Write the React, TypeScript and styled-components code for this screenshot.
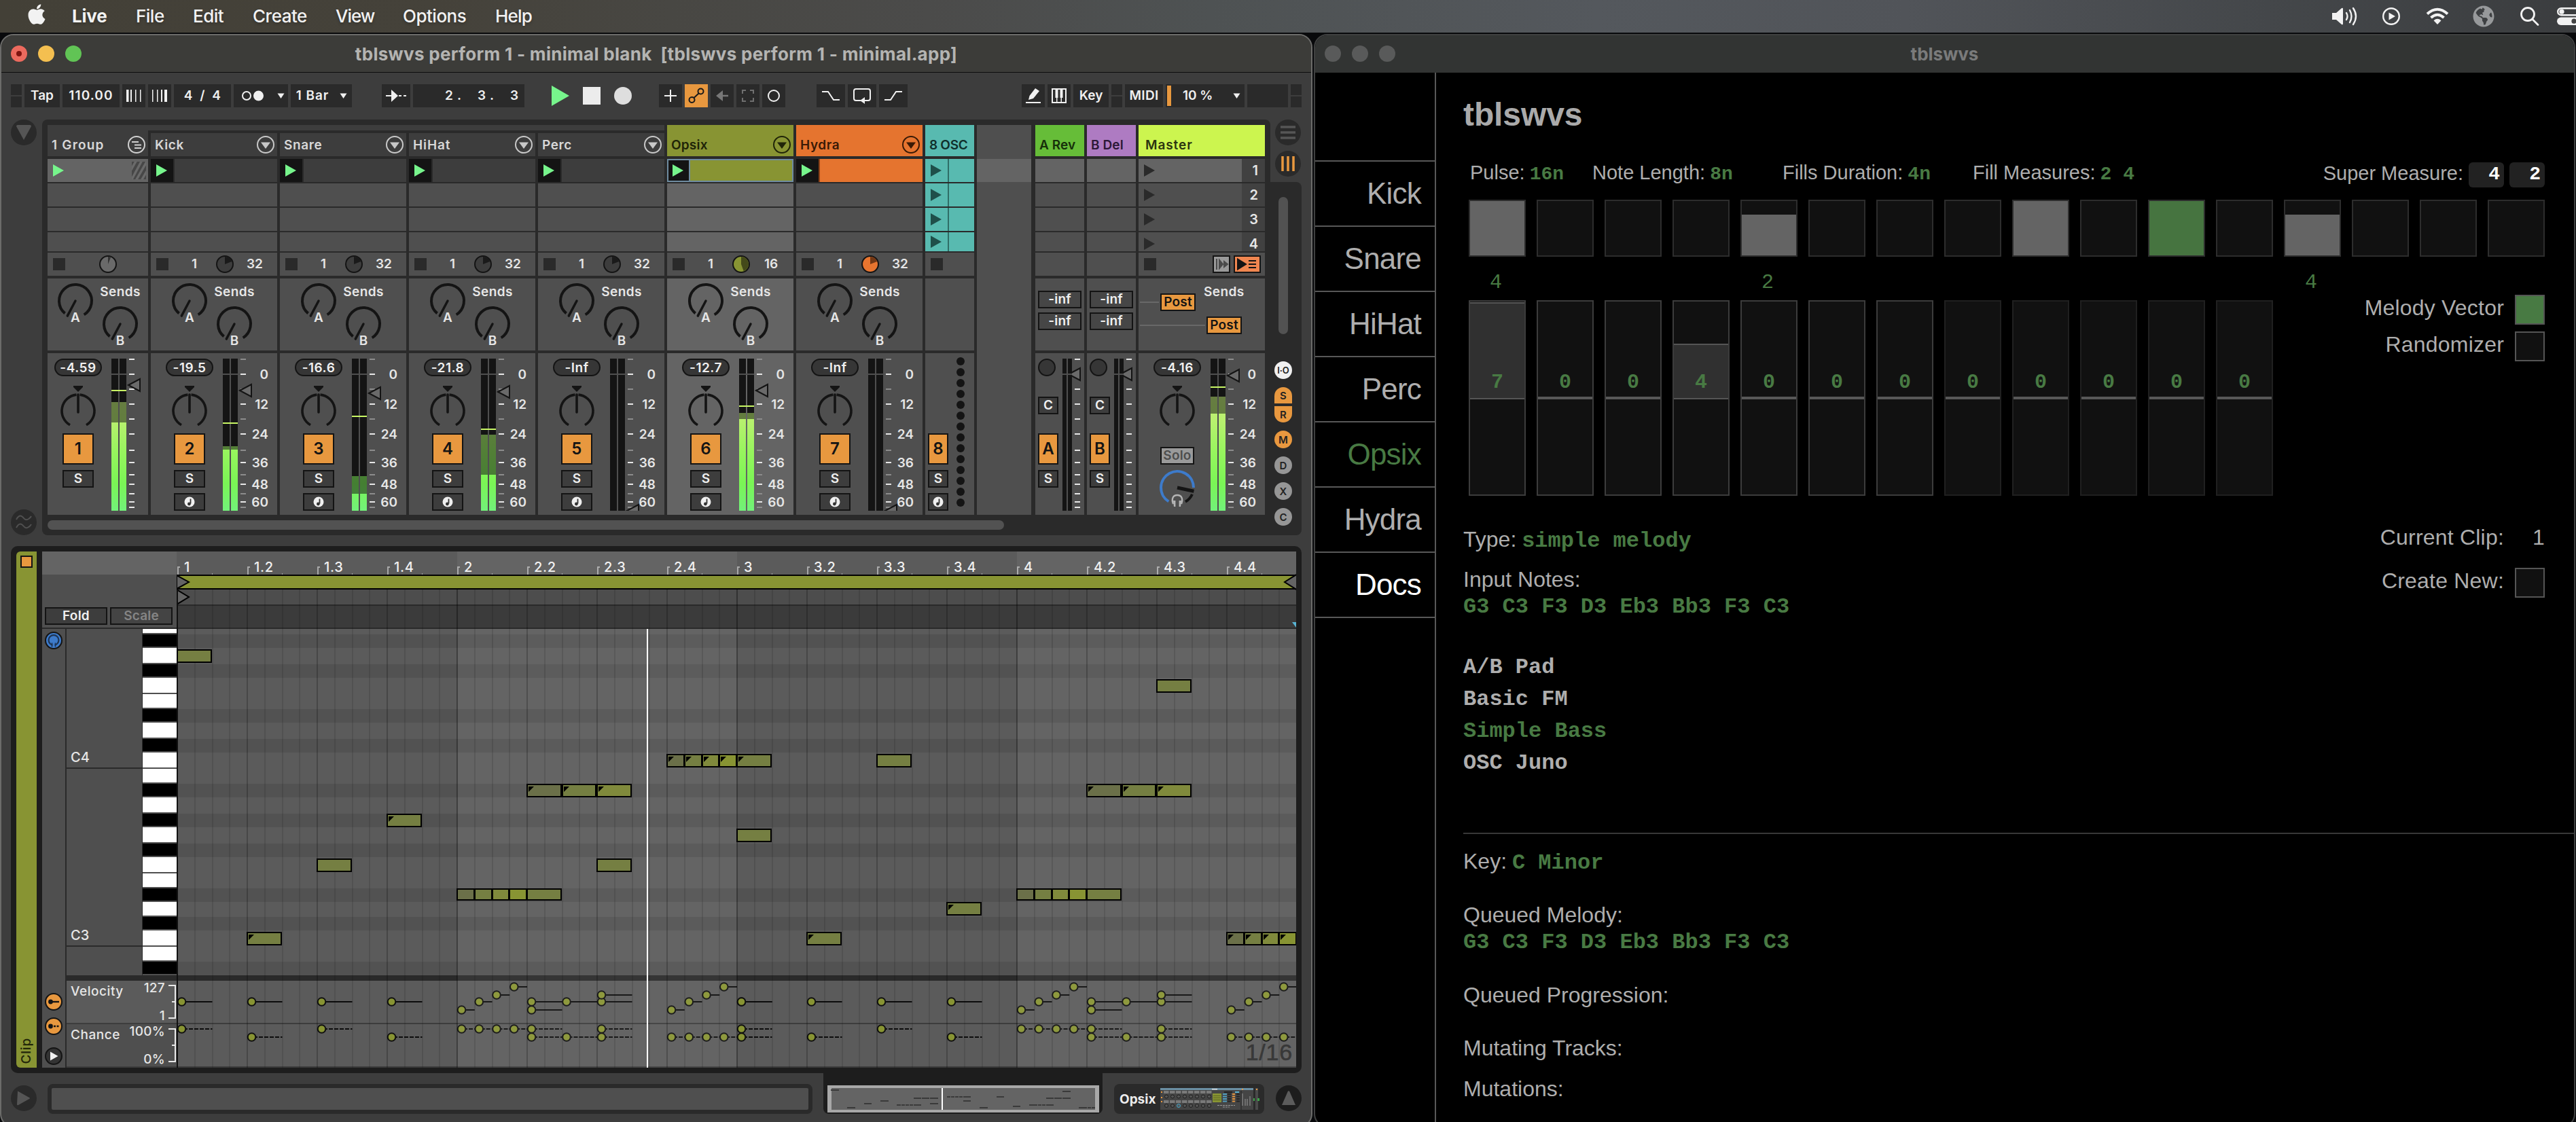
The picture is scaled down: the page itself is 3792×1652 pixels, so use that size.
import React from 'react';
import styled, { createGlobalStyle, css } from 'styled-components';
import { FaApple, FaGlobeAmericas } from 'react-icons/fa';

const ui = "Inter, 'Noto Sans', sans-serif";
const helv = "'Liberation Sans', Arial, sans-serif";
const mono = "'Liberation Mono', 'Courier New', monospace";

const c = {
  body: '#3d3d3d',
  dark: '#2a2a2a',
  deep: '#1d1d1d',
  ink: '#141414',
  cell: '#4f4f4f',
  lit: '#646464',
  text: '#e6e6e6',
  orange: '#e8983f',
  olive: '#889433',
  green: '#487a43',
  play: '#77f58c',
};

const Global = createGlobalStyle`
  * { box-sizing: border-box; }
  html, body { margin: 0; background: #000; }
  svg { display: block; flex: none; overflow: visible; }
`;

/* ---------- desktop ---------- */

const Desktop = styled.div`
  width: 3792px;
  height: 1652px;
  overflow: hidden;
  background: #08090b;
  font-family: ${ui};
`;

const MenuBar = styled.header`
  display: flex;
  align-items: center;
  justify-content: space-between;
  height: 48px;
  padding: 0 0 0 37px;
  color: #f2f2f2;
  background: linear-gradient(90deg, #434037 0%, #45423a 17%, #484743 26%, #4b4b4a 36%, #4e5253 47%, #54585d 62%, #515459 74%, #44474a 88%, #3b3d3f 100%);
`;

const MenuGroup = styled.nav`
  display: flex;
  align-items: center;
  height: 48px;
`;

const MenuItem = styled.span<{ $w: number; $bold?: boolean; $ls?: number }>`
  width: ${(p) => p.$w}px;
  font-size: 26px;
  line-height: 46px;
  font-weight: ${(p) => (p.$bold ? 700 : 500)};
  letter-spacing: ${(p) => p.$ls ?? -0.5}px;
  white-space: nowrap;
  text-shadow: 0 2px 4px rgba(0, 0, 0, 0.25);
`;

const AppleMark = styled.span`
  width: 69px;
  height: 36px;
  margin-top: -5px;
`;

const StatusIcon = styled.span<{ $w: number }>`
  display: flex;
  justify-content: center;
  width: ${(p) => p.$w}px;
`;

const Windows = styled.div`
  display: flex;
  gap: 2px;
  padding-top: 2px;
  height: 1604px;
`;

const Window = styled.section<{ $w: number; $edge: string; $bg: string }>`
  flex: none;
  width: ${(p) => p.$w}px;
  height: 1610px;
  overflow: hidden;
  border: 2px solid ${(p) => p.$edge};
  border-radius: 20px;
  background: ${(p) => p.$bg};
`;

const TitleBar = styled.div<{ $bg: string; $line: string; $fg: string }>`
  display: grid;
  grid-template-columns: 140px 1fr 140px;
  align-items: center;
  height: 55px;
  background: ${(p) => p.$bg};
  border-bottom: 1px solid ${(p) => p.$line};
  color: ${(p) => p.$fg};
`;

const Lights = styled.div`
  display: flex;
  gap: 16px;
  padding-left: 14px;
`;

const Light = styled.span<{ $c: string; $dot?: boolean }>`
  display: flex;
  align-items: center;
  justify-content: center;
  width: 24px;
  height: 24px;
  border-radius: 50%;
  background: ${(p) => p.$c};
  ${(p) =>
    p.$dot &&
    css`
      &::after {
        content: '';
        width: 8px;
        height: 8px;
        border-radius: 50%;
        background: #7d1410;
      }
    `}
`;

const Title = styled.h2<{ $ls?: number }>`
  margin: 0;
  font-size: 26px;
  font-weight: 700;
  line-height: 51px;
  text-align: center;
  white-space: pre;
  letter-spacing: ${(p) => p.$ls ?? 0}px;
`;

/* ---------- Live: control bar ---------- */

const ControlBar = styled.div`
  display: flex;
  gap: 4px;
  height: 69px;
  padding: 17px 0 0 14px;
`;

const Tool = styled.span<{ $w: number; $ml?: number; $on?: boolean; $bare?: boolean; $ls?: number }>`
  display: flex;
  flex: none;
  align-items: center;
  justify-content: center;
  width: ${(p) => p.$w}px;
  height: 34px;
  margin-left: ${(p) => p.$ml ?? 0}px;
  background: ${(p) => (p.$bare ? 'transparent' : p.$on ? c.orange : c.dark)};
  color: #f0f0f0;
  font-size: 19px;
  font-weight: 600;
  line-height: 34px;
  letter-spacing: ${(p) => p.$ls ?? 0}px;
  white-space: pre;
`;

const Position = styled.span`
  display: flex;
  justify-content: space-between;
  width: 24px;
  margin-right: 24px;
  &:last-child { margin-right: -4px; }
`;

const Split = styled.span`
  display: flex;
  flex: none;
  flex-direction: column;
  gap: 2px;
  width: 16px;
  height: 34px;
  &::before,
  &::after {
    content: '';
    flex: 1;
    background: ${c.dark};
  }
`;

const Caret = () => (
  <svg width="11" height="8" viewBox="0 0 11 8">
    <path d="M0.5 0.5h10L5.5 8z" fill="#f0f0f0" />
  </svg>
);

const CpuBar = styled.span`
  width: 6px;
  height: 30px;
  margin-right: 17px;
  background: ${c.orange};
`;

/* ---------- Live: session view ---------- */

const Session = styled.div`
  display: flex;
  height: 612px;
`;

const Gutter = styled.div`
  display: flex;
  flex-direction: column;
  justify-content: space-between;
  width: 60px;
  padding-left: 14px;
`;

const RoundButton = styled.span<{ $bg?: string }>`
  display: flex;
  flex: none;
  align-items: center;
  justify-content: center;
  width: 38px;
  height: 38px;
  border-radius: 50%;
  background: ${(p) => p.$bg ?? c.dark};
`;

const Mixer = styled.div`
  width: 1808px;
  padding: 8px 8px 8px;
  border-radius: 8px 8px 0 8px;
  background: ${c.dark};
`;

const Columns = styled.div`
  display: flex;
  gap: 4px;
  height: 574px;
`;

const Column = styled.div<{ $w: number; $ml?: number }>`
  display: flex;
  flex: none;
  flex-direction: column;
  width: ${(p) => p.$w}px;
  margin-left: ${(p) => p.$ml ?? 0}px;
`;

const Blank = styled(Column)`
  background: linear-gradient(${c.cell} 50px, ${c.lit} 50px, ${c.lit} 84px, ${c.cell} 84px);
`;

const GroupStrip = styled.div`
  width: calc(100% + 4px);
  height: 8px;
  margin: 0 0 4px -4px;
  background: ${c.body};
`;

const Head = styled.div<{ $bg: string; $fg: string; $h: number; $ls?: number }>`
  display: flex;
  align-items: flex-end;
  justify-content: space-between;
  height: ${(p) => p.$h}px;
  margin-bottom: 4px;
  padding: 0 4px 4px 6px;
  background: ${(p) => p.$bg};
  color: ${(p) => p.$fg};
  font-size: 19px;
  font-weight: 600;
  line-height: 25px;
  letter-spacing: ${(p) => p.$ls ?? 0.6}px;
  white-space: nowrap;
`;

const Slot = styled.div<{ $bg: string; $h?: number; $edge?: string }>`
  display: flex;
  align-items: center;
  height: ${(p) => p.$h ?? 34}px;
  margin-bottom: 2px;
  background: ${(p) => p.$bg};
  overflow: hidden;
  ${(p) => p.$edge && `border: 2px solid ${p.$edge};`}
`;

const Launch = styled.span<{ $bg: string; $line: string; $w?: number }>`
  display: flex;
  align-items: center;
  width: ${(p) => p.$w ?? 35}px;
  height: 100%;
  padding-left: 8px;
  background: ${(p) => p.$bg};
  border-right: 2px solid ${(p) => p.$line};
`;

const SceneNumber = styled.span`
  width: 34px;
  height: 34px;
  margin-left: auto;
  padding-right: 10px;
  background: #414141;
  color: ${c.text};
  font-size: 20px;
  font-weight: 600;
  line-height: 34px;
  text-align: right;
`;

const Status = styled.div`
  display: flex;
  align-items: center;
  height: 34px;
  margin-bottom: 4px;
  padding-left: 8px;
  background: ${c.cell};
  color: ${c.text};
  font-size: 19px;
  font-weight: 600;
  line-height: 34px;
`;

const StopSquare = styled.span`
  flex: none;
  width: 18px;
  height: 18px;
  background: ${c.dark};
`;

const Count = styled.span<{ $w: number }>`
  width: ${(p) => p.$w}px;
  text-align: center;
`;

const Sends = styled.div<{ $bg: string; $pl: number }>`
  display: flex;
  gap: 14px;
  height: 106px;
  margin-bottom: 4px;
  padding: 7px 0 0 ${(p) => p.$pl}px;
  background: ${(p) => p.$bg};
`;

const SendColumn = styled.div`
  display: flex;
  flex-direction: column;
  align-items: center;
  gap: 9px;
  width: 52px;
`;

const SendsLabel = styled.span`
  color: ${c.text};
  font-size: 19px;
  font-weight: 600;
  line-height: 25px;
  letter-spacing: 0.4px;
`;

const Strip = styled.div<{ $bg: string }>`
  display: flex;
  height: 238px;
  padding-top: 8px;
  background: ${(p) => p.$bg};
  overflow: hidden;
`;

const Controls = styled.div<{ $w: number; $pad: string; $start?: boolean }>`
  display: flex;
  flex: none;
  flex-direction: column;
  align-items: ${(p) => (p.$start ? 'flex-start' : 'center')};
  gap: 8px;
  width: ${(p) => p.$w}px;
  padding: ${(p) => p.$pad};
`;

const Pill = styled.span<{ $w?: number }>`
  width: ${(p) => p.$w ?? 70}px;
  height: 26px;
  margin-bottom: 2px;
  border: 2px solid ${c.ink};
  border-radius: 13px;
  background: #363636;
  color: #f0f0f0;
  font-size: 19px;
  font-weight: 600;
  line-height: 23px;
  letter-spacing: 0.5px;
  text-align: center;
`;

const PadButton = styled.span<{ $w: number; $h: number; $bg?: string; $fg?: string; $fs?: number; $mt?: number }>`
  display: flex;
  flex: none;
  align-items: center;
  justify-content: center;
  width: ${(p) => p.$w}px;
  height: ${(p) => p.$h}px;
  margin-top: ${(p) => p.$mt ?? 0}px;
  border: 2px solid ${c.ink};
  background: ${(p) => p.$bg ?? c.body};
  color: ${(p) => p.$fg ?? '#f0f0f0'};
  font-size: ${(p) => p.$fs ?? 19}px;
  font-weight: 600;
  line-height: 24px;
  letter-spacing: 0.2px;
`;

const MeterBox = styled.div`
  position: relative;
  display: flex;
  flex: none;
  gap: 2px;
  height: 224px;
`;

const MeterBar = styled.div<{ $w: number; $live: boolean }>`
  width: ${(p) => p.$w}px;
  height: 224px;
  background: ${(p) =>
    p.$live ? 'linear-gradient(180deg, #d2f47c 0%, #b9f06f 40%, #96f55d 62%, #7af555 82%, #72f17a 100%)' : c.ink};
`;

const MeterEmpty = styled.div`
  background: ${c.ink};
`;

const MeterDim = styled.div`
  background: rgba(20, 20, 20, 0.52);
`;

const ZeroLine = styled.i`
  position: absolute;
  top: 22px;
  left: 0;
  right: 0;
  height: 2px;
  background: ${c.cell};
`;

const PeakLine = styled.i`
  position: absolute;
  left: 0;
  right: 0;
  height: 2px;
  background: #c9f765;
`;

const Dots = styled.div`
  display: flex;
  flex-direction: column;
  gap: 4px;
  padding: 0 0 0 12px;
  margin-top: -2px;
  & > i {
    width: 12px;
    height: 12px;
    border-radius: 50%;
    background: ${c.ink};
  }
`;

const ReturnSends = styled.div`
  display: flex;
  flex-direction: column;
  gap: 6px;
  height: 106px;
  margin-bottom: 4px;
  padding: 18px 4px 0;
  background: ${c.cell};
`;

const MasterSends = styled.div`
  display: grid;
  grid-template-columns: 30px 52px 16px 52px 1fr;
  grid-template-rows: 34px 26px;
  height: 106px;
  margin-bottom: 4px;
  padding: 22px 0 0 2px;
  background: ${c.cell};
`;

const Lead = styled.i<{ $span: number }>`
  grid-column: 1 / span ${(p) => p.$span};
  height: 2px;
  margin-top: 12px;
  margin-right: 2px;
  background: #686868;
`;

const MasterLabel = styled(SendsLabel)`
  grid-column: 4 / span 2;
  margin-top: -15px;
  margin-left: -4px;
`;

const HScroll = styled.div`
  width: 1408px;
  height: 14px;
  margin-top: 8px;
  border-radius: 7px;
  background: #525252;
`;

const SideRail = styled.div`
  display: flex;
  flex-direction: column;
  width: 46px;
`;

const RailTop = styled.div`
  display: flex;
  flex-direction: column;
  gap: 8px;
  height: 92px;
  padding-left: 7px;
`;

const RailBody = styled.div`
  display: flex;
  flex: 1;
  flex-direction: column;
  align-items: center;
  padding: 22px 8px 0 0;
  border-radius: 0 8px 8px 0;
  background: ${c.dark};
`;

const VScroll = styled.i`
  width: 14px;
  height: 202px;
  margin-bottom: 40px;
  border-radius: 7px;
  background: #525252;
  flex: none;
`;

const Toggle = styled.span<{ $bg: string; $h?: number; $r?: string; $mb: number; $fs?: number }>`
  display: flex;
  flex: none;
  align-items: center;
  justify-content: center;
  width: 26px;
  height: ${(p) => p.$h ?? 26}px;
  margin-bottom: ${(p) => p.$mb}px;
  border-radius: ${(p) => p.$r ?? '13px'};
  background: ${(p) => p.$bg};
  color: #222;
  font-size: ${(p) => p.$fs ?? 15}px;
  font-weight: 600;
`;

/* ---------- Live: clip view ---------- */

const ClipPanel = styled.div`
  display: flex;
  gap: 8px;
  width: 1900px;
  height: 776px;
  margin: 16px 0 0 14px;
  padding: 8px;
  border-radius: 10px;
  background: ${c.deep};
`;

const ClipHandle = styled.div`
  display: flex;
  flex: none;
  flex-direction: column;
  align-items: center;
  justify-content: space-between;
  width: 30px;
  padding: 6px 0 6px;
  border-radius: 6px 0 0 6px;
  background: ${c.olive};
  color: #22260a;
`;

const ClipActive = styled.i`
  width: 18px;
  height: 18px;
  border: 2px solid ${c.ink};
  background: ${c.orange};
`;

const ClipName = styled.span`
  writing-mode: vertical-rl;
  transform: rotate(180deg);
  font-size: 19px;
  font-weight: 500;
  line-height: 26px;
  letter-spacing: 0.8px;
`;

const EditorSide = styled.div`
  flex: none;
  width: 198px;
  margin-right: -8px;
  background: ${c.cell};
`;

const SideHead = styled.div`
  height: 114px;
  padding: 82px 0 0 4px;
  display: flex;
  gap: 4px;
  background: linear-gradient(${c.lit} 34px, ${c.cell} 34px);
  border-bottom: 2px solid ${c.dark};
`;

const SideBody = styled.div`
  display: flex;
  height: 646px;
`;

const IconRail = styled.div`
  display: flex;
  flex-direction: column;
  align-items: center;
  width: 36px;
  padding-top: 4px;
  border-right: 2px solid ${c.dark};
`;

const SidePane = styled.div`
  width: 162px;
`;

const KeyArea = styled.div`
  display: flex;
  height: 510px;
`;

const Octaves = styled.div`
  width: 112px;
  border-right: 1px solid ${c.dark};
`;

const Octave = styled.div<{ $h: number }>`
  display: flex;
  align-items: flex-end;
  height: ${(p) => p.$h}px;
  padding: 0 0 2px 6px;
  border-bottom: 2px solid ${c.dark};
  color: ${c.text};
  font-size: 20px;
  font-weight: 500;
  line-height: 26px;
  &:last-child { border-bottom: 0; }
`;

const Keys = styled.div`
  width: 50px;
`;

const Key = styled.div<{ $h: number; $black: boolean }>`
  height: ${(p) => p.$h}px;
  border-bottom: 2px solid ${c.cell};
  background: ${(p) => (p.$black ? '#000' : '#fff')};
`;

const LaneHead = styled.div<{ $bg: string }>`
  display: flex;
  justify-content: space-between;
  height: 62px;
  background: ${(p) => p.$bg};
  color: ${c.text};
  font-size: 19px;
  font-weight: 500;
`;

const LaneName = styled.span<{ $t: number }>`
  padding: ${(p) => p.$t}px 0 0 6px;
  line-height: 24px;
  letter-spacing: 0.55px;
`;

const LaneRange = styled.span<{ $t: number }>`
  display: flex;
  flex: 1;
  flex-direction: column;
  align-items: flex-end;
  justify-content: space-between;
  padding: ${(p) => p.$t}px 5px 0 0;
  line-height: 20px;
  letter-spacing: 0.3px;
`;

const Band = styled.div<{ $h: number; $bg: string }>`
  height: ${(p) => p.$h}px;
  background: ${(p) => p.$bg};
`;

const Editor = styled.div`
  position: relative;
  flex: none;
  width: 1648px;
  overflow: hidden;
`;

const Ruler = styled.div`
  display: flex;
  height: 34px;
  padding-left: 1px;
  background: #5b5b5b;
`;

const RulerBeat = styled.div`
  flex: none;
  width: 103px;
  height: 34px;
  padding: 10px 0 0 10px;
  color: #f0f0f0;
  font-size: 20px;
  font-weight: 500;
  line-height: 26px;
  letter-spacing: 0.7px;
  background: linear-gradient(#a8a8a8, #a8a8a8) 0 22px / 2px 12px no-repeat,
    linear-gradient(#a8a8a8, #a8a8a8) 0 22px / 4px 2px no-repeat,
    linear-gradient(#a8a8a8, #a8a8a8) 51px 32px / 1px 2px no-repeat;
`;

const LoopBrace = styled.div`
  display: flex;
  justify-content: space-between;
  height: 22px;
  border-top: 2px solid #000;
  border-bottom: 2px solid #000;
  background: ${c.olive};
`;

const MarkerRow = styled.div`
  height: 24px;
  background: #4d4d4d;
  border-bottom: 2px solid ${c.dark};
`;

const ScaleRow = styled.div`
  display: flex;
  align-items: flex-end;
  justify-content: flex-end;
  height: 34px;
  background: #3b3b3b;
  border-bottom: 2px solid ${c.dark};
`;

const RollRow = styled.div<{ $h: number; $black: boolean }>`
  height: ${(p) => p.$h}px;
  background: ${(p) => (p.$black ? '#525252' : '#5b5b5b')};
`;

const Lane = styled.div`
  height: 62px;
  background: #5b5b5b;
`;

const Overlay = styled.svg`
  position: absolute;
  top: 0;
  left: 0;
`;

const Note = styled.i<{ $c: string; $h: number }>`
  position: absolute;
  height: ${(p) => p.$h}px;
  border: 2px solid #000;
  background: ${(p) => p.$c};
`;

const NoteChance = styled.i`
  display: block;
  width: 8px;
  height: 8px;
  margin: 2px 0 0 1px;
  background: #000;
  clip-path: polygon(0 0, 100% 0, 0 100%);
`;

const Playhead = styled.i<{ $l: number; $t: number; $h: number }>`
  position: absolute;
  left: ${(p) => p.$l}px;
  top: ${(p) => p.$t}px;
  width: 2px;
  height: ${(p) => p.$h}px;
  background: #fff;
`;

const GridSize = styled.span`
  position: absolute;
  right: 5px;
  bottom: 0;
  color: #383838;
  font-family: ${helv};
  font-size: 34px;
  line-height: 46px;
  letter-spacing: 0.8px;
  -webkit-text-stroke: 0.6px #383838;
`;

/* ---------- Live: status bar ---------- */

const StatusBar = styled.div`
  display: flex;
  height: 72px;
  padding-left: 14px;
`;

const InfoBox = styled.div`
  width: 1126px;
  height: 44px;
  margin: 16px 16px 0 16px;
  border: 6px solid ${c.dark};
  border-radius: 8px;
  background: ${c.cell};
`;

const OverviewTab = styled.div`
  width: 411px;
  height: 60px;
  padding: 18px 5px 0 6px;
  border-radius: 0 0 8px 8px;
  background: ${c.deep};
`;

const Overview = styled.div`
  position: relative;
  height: 40px;
  border: solid #a8a8a8;
  border-width: 4px 6px;
  background: ${c.lit};
`;

const MiniNote = styled.i`
  position: absolute;
  height: 2px;
  background: #3a3a3a;
`;

const DeviceTab = styled.div`
  display: flex;
  align-items: center;
  gap: 7px;
  width: 221px;
  height: 44px;
  margin: 16px 17px 0;
  padding: 0 0 0 8px;
  border-radius: 8px;
  background: ${c.dark};
  color: #ececec;
  font-size: 19px;
  font-weight: 700;
`;

/* ---------- Sequencer window ---------- */

const SeqBody = styled.div`
  display: flex;
  height: 1548px;
  font-family: ${helv};
  color: #aeaeae;
`;

const Sidebar = styled.nav`
  flex: none;
  width: 178px;
  padding-top: 129px;
  border-right: 2px solid #585858;
`;

const NavItem = styled.a<{ $c?: string }>`
  display: block;
  height: 96px;
  padding-right: 20px;
  border-top: 2px solid #585858;
  color: ${(p) => p.$c ?? '#aeaeae'};
  font-size: 44px;
  line-height: 93px;
  letter-spacing: -0.8px;
  text-align: right;
  &:last-child {
    height: 98px;
    border-bottom: 2px solid #585858;
  }
`;

const Main = styled.main`
  flex: 1;
  padding: 32px 0 0 40px;
  font-size: 32px;
`;

const Heading = styled.h1`
  margin: 0;
  font-size: 48px;
  line-height: 60px;
  letter-spacing: -0.1px;
  color: #aaa;
`;

const Params = styled.div`
  display: flex;
  align-items: center;
  width: 1582px;
  height: 40px;
  margin: 36px 0 0 10px;
  font-size: 29px;
  white-space: pre;
`;

const Param = styled.span<{ $w?: number }>`
  ${(p) => (p.$w ? `width: ${p.$w}px;` : 'margin-left: auto;')}
`;

const Mono = styled.b<{ $fs?: number }>`
  margin-left: -1px;
  font-family: ${mono};
  font-size: ${(p) => p.$fs ?? 32}px;
  color: ${c.green};
`;

const NumberField = styled.span`
  width: 52px;
  height: 37px;
  margin: 5px 0 0 8px;
  padding-right: 6px;
  border-radius: 6px;
  background: #222;
  color: #fff;
  font: 700 28px/36px ${mono};
  text-align: right;
`;

const Steps = styled.div`
  display: flex;
  gap: 16px;
  margin: 19px 0 0 8px;
`;

const Step = styled.div`
  display: flex;
  align-items: flex-end;
  width: 84px;
  height: 84px;
  border: 2px solid #2d2d2d;
  background: #111;
`;

const StepFill = styled.i<{ $h: number; $c: string }>`
  flex: 1;
  height: ${(p) => p.$h}px;
  background: ${(p) => p.$c};
`;

const Counts = styled.div`
  display: flex;
  gap: 16px;
  height: 40px;
  margin: 18px 0 0 6px;
  color: ${c.green};
  font: 400 30px/40px ${mono};
  & > span {
    width: 84px;
    text-align: center;
  }
`;

const VectorRow = styled.div`
  display: flex;
  justify-content: space-between;
  width: 1592px;
  margin-top: 6px;
  padding-left: 8px;
`;

const Bars = styled.div`
  display: flex;
  gap: 16px;
`;

const Bar = styled.div<{ $edge: string }>`
  width: 84px;
  height: 288px;
  border: 2px solid ${(p) => p.$edge};
  background: #111;
`;

const BarUpper = styled.div`
  position: relative;
  display: flex;
  flex-direction: column;
  justify-content: flex-end;
  height: 140px;
`;

const BarFill = styled.i<{ $h: number }>`
  position: absolute;
  left: 0;
  right: 0;
  bottom: -4px;
  height: ${(p) => p.$h}px;
  border: solid #555;
  border-width: 2px 0;
  background: #303030;
`;

const BarValue = styled.b`
  position: relative;
  color: ${c.green};
  font: 700 30px/40px ${mono};
  text-align: center;
  padding-bottom: 1px;
`;

const BarZero = styled.i`
  display: block;
  height: 4px;
  background: #585858;
`;

const Checks = styled.div<{ $mt?: number; $gap: number }>`
  display: flex;
  flex-direction: column;
  align-items: flex-end;
  gap: ${(p) => p.$gap}px;
  margin-top: ${(p) => p.$mt ?? 0}px;
`;

const Check = styled.div`
  display: flex;
  gap: 16px;
  height: 44px;
  line-height: 38px;
  letter-spacing: 0.2px;
`;

const CheckBox = styled.i<{ $on?: boolean }>`
  width: 44px;
  height: 44px;
  border: 2px solid #555;
  background: ${(p) => (p.$on ? c.green : '#111')};
`;

const ClipIndex = styled.span`
  width: 44px;
  text-align: right;
`;

const Detail = styled.div`
  display: flex;
  justify-content: space-between;
  width: 1592px;
  margin-top: 42px;
`;

const Line = styled.div<{ $h?: number; $mt?: number; $mono?: boolean; $c?: string }>`
  height: ${(p) => p.$h ?? 38}px;
  margin-top: ${(p) => p.$mt ?? 0}px;
  line-height: ${(p) => p.$h ?? 38}px;
  white-space: pre;
  color: ${(p) => p.$c ?? 'inherit'};
  ${(p) => p.$mono && `font-family: ${mono}; font-weight: 700;`}
`;

const Rule = styled.hr`
  height: 2px;
  margin: 79px 0 18px;
  border: 0;
  background: #383838;
`;

/* ---------- drawings ---------- */

const pt = (cx: number, cy: number, r: number, deg: number) => {
  const a = ((deg - 90) * Math.PI) / 180;
  return `${(cx + r * Math.cos(a)).toFixed(2)} ${(cy + r * Math.sin(a)).toFixed(2)}`;
};
const arc = (cx: number, cy: number, r: number, a: number, b: number) =>
  `M${pt(cx, cy, r, a)}A${r} ${r} 0 ${b - a > 180 ? 1 : 0} 1 ${pt(cx, cy, r, b)}`;

const PlayIcon = ({ color, w = 16, h = 18 }: { color: string; w?: number; h?: number }) => (
  <svg width={w} height={h} viewBox="0 0 16 18" preserveAspectRatio="none">
    <path d="M0 0L16 9L0 18z" fill={color} />
  </svg>
);

const DropIcon = ({ color }: { color: string }) => (
  <svg width="26" height="26" viewBox="0 0 26 26">
    <circle cx="13" cy="13" r="12" fill="none" stroke={color} strokeWidth="2" />
    <path d="M6 9.5h14L13 19z" fill={color} />
  </svg>
);

const FoldIcon = () => (
  <svg width="26" height="26" viewBox="0 0 26 26" stroke="#d0d0d0" strokeWidth="2" fill="none">
    <circle cx="13" cy="13" r="12" />
    <path d="M6 9h10M10 13.5h10M10 18h10" />
  </svg>
);

const Pie = ({ fill, wedge, to }: { fill: string; wedge: string; to: number }) => (
  <svg width="26" height="26" viewBox="0 0 26 26">
    <circle cx="13" cy="13" r="12" fill={fill} stroke={c.ink} strokeWidth="2" />
    <path d={`M13 13L${pt(13, 13, 11, 0)}A11 11 0 0 1 ${pt(13, 13, 11, to)}z`} fill={wedge} />
  </svg>
);

const SendKnob = ({ name }: { name: string }) => (
  <svg width="52" height="60" viewBox="0 0 52 60">
    <path d={arc(26, 26, 24, 220, 508)} fill="none" stroke={c.ink} strokeWidth="4" />
    <path d={`M26 26L${pt(26, 26, 25, 208)}`} stroke={c.ink} strokeWidth="3.5" strokeLinecap="round" />
    <text x="26" y="57" textAnchor="middle" fill={c.text} fontSize="19" fontWeight="600" fontFamily="Inter">
      {name}
    </text>
  </svg>
);

const PanKnob = () => (
  <svg width="52" height="66" viewBox="0 0 52 66">
    <path d="M19 4h14v2L26 13L19 6z" fill={c.ink} />
    <path d={arc(26, 41, 24, 210, 354)} fill="none" stroke={c.ink} strokeWidth="3.6" />
    <path d={arc(26, 41, 24, 6, 150)} fill="none" stroke={c.ink} strokeWidth="3.6" />
    <path d="M26 17V43" stroke={c.ink} strokeWidth="3.6" strokeLinecap="round" />
  </svg>
);

const CueKnob = () => (
  <svg width="52" height="56" viewBox="0 0 52 56">
    <path d={arc(26, 26, 24, 212, 450)} fill="none" stroke="#3d7bcb" strokeWidth="4" />
    <path d={arc(26, 26, 24, 114, 150)} fill="none" stroke={c.ink} strokeWidth="4" />
    <path d={`M26 26L${pt(26, 26, 25, 102)}`} stroke={c.ink} strokeWidth="5" />
    <path d="M20 50c-3-8 0-13 6-13s9 5 6 13" fill="none" stroke="#b5b5b5" strokeWidth="2.4" />
    <path d="M20 45h3.4v9H21zM32 45h-3.4v9H31z" fill="#b5b5b5" />
  </svg>
);

const ArmIcon = () => (
  <svg width="16" height="16" viewBox="0 0 16 16">
    <circle cx="8" cy="8" r="7.5" fill="#f0f0f0" />
    <path d="M9.5 3.5v7" stroke="#333" strokeWidth="1.8" />
    <circle cx="7.4" cy="11" r="2.4" fill="#333" />
  </svg>
);

const TICKS = [1, 23, 45, 67, 89, 111, 135, 153, 171, 185, 199, 211, 219];
const SCALE: [number, string][] = [[23, '0'], [67, '12'], [111, '24'], [153, '36'], [185, '48'], [211, '60']];

const ScaleArt = styled.svg`
  overflow: hidden;
`;

const FaderScale = ({ fader }: { fader: number }) => (
  <ScaleArt width="58" height="224" viewBox="0 0 58 224">
    {TICKS.map((y) => (
      <rect key={y} x="4" y={y - 1} width="8" height="2" fill={SCALE.some((s) => s[0] === y) ? '#e8e8e8' : '#8c8c8c'} />
    ))}
    <path d={`M3 ${fader}L20 ${fader - 9}V${fader + 9}z`} fill="#6a6a6a" stroke={c.ink} strokeWidth="2" />
    {SCALE.map(([y, t]) => (
      <text key={t} x="45" y={y + 7} textAnchor="end" fill={c.text} fontSize="19" fontWeight="600" fontFamily="Inter">
        {t}
      </text>
    ))}
  </ScaleArt>
);

const PlainScale = ({ w, x, fader }: { w: number; x: number; fader: number }) => (
  <svg width={w} height="224" viewBox={`0 0 ${w} 224`}>
    {TICKS.map((y) => (
      <rect key={y} x="4" y={y - 1} width="8" height="2" fill="#e8e8e8" />
    ))}
    <path d={`M${x} ${fader}L${x + 17} ${fader - 9}V${fader + 9}z`} fill="#6a6a6a" stroke={c.ink} strokeWidth="2" />
  </svg>
);

/* ---------- channel strips ---------- */

type Level = { dim: number; lit: number; peak: number };

const Meter = ({ level, w = 10 }: { level?: Level; w?: number }) => (
  <MeterBox>
    {[0, 1].map((k) => (
      <MeterBar key={k} $w={w} $live={!!level}>
        {level && (
          <>
            <MeterEmpty style={{ height: level.dim }} />
            <MeterDim style={{ height: level.lit - level.dim }} />
          </>
        )}
      </MeterBar>
    ))}
    <ZeroLine />
    {level && <PeakLine style={{ top: level.peak }} />}
  </MeterBox>
);

type TrackInfo = {
  n: number;
  name: string;
  ls?: number;
  bg?: string;
  fg?: string;
  clip?: string;
  edge?: string;
  lit?: boolean;
  len: string;
  pie: [string, string, number];
  vol: string;
  level?: Level;
  fader: number;
};

const greyPie: [string, string, number] = ['#3d3d3d', '#1a1a1a', 68];

const TRACKS: TrackInfo[] = [
  { n: 2, name: 'Kick', len: '32', pie: greyPie, vol: '-19.5', level: { dim: 129, lit: 134, peak: 94 }, fader: 47 },
  { n: 3, name: 'Snare', len: '32', pie: greyPie, vol: '-16.6', level: { dim: 173, lit: 199, peak: 84 }, fader: 51 },
  { n: 4, name: 'HiHat', ls: 0.9, len: '32', pie: greyPie, vol: '-21.8', level: { dim: 112, lit: 171, peak: 103 }, fader: 49 },
  { n: 5, name: 'Perc', len: '32', pie: greyPie, vol: '-Inf', fader: 224 },
  { n: 6, name: 'Opsix', ls: 0.2, bg: c.olive, fg: '#202408', clip: c.olive, edge: '#6f8ca0', lit: true, len: '16', pie: ['#889433', '#444a1a', 160], vol: '-12.7', level: { dim: 80, lit: 89, peak: 69 }, fader: 47 },
  { n: 7, name: 'Hydra', bg: '#e5742f', fg: '#3a1a06', clip: '#e5742f', len: '32', pie: ['#e8752f', '#733815', 68], vol: '-Inf', fader: 224 },
];

const Track = ({ t }: { t: TrackInfo }) => {
  const bg = t.lit ? c.lit : c.cell;
  return (
    <Column $w={186}>
      {!t.bg && <GroupStrip />}
      <Head $bg={t.bg ?? c.body} $fg={t.fg ?? '#d8d8d8'} $h={t.bg ? 46 : 34} $ls={t.ls}>
        {t.name}
        <DropIcon color={t.fg ?? '#c8c8c8'} />
      </Head>
      <Slot $bg={t.clip ?? c.body} $edge={t.edge}>
        <Launch $bg={c.ink} $line={t.edge ?? (t.clip ? '#8a4118' : c.dark)} $w={t.edge ? 32 : 35} style={t.edge ? { paddingLeft: 6 } : undefined}>
          <PlayIcon color={c.play} />
        </Launch>
      </Slot>
      <Slot $bg={bg} />
      <Slot $bg={bg} />
      <Slot $bg={bg} $h={28} />
      <Status>
        <StopSquare />
        <Count $w={76}>1</Count>
        <span style={{ marginLeft: -6 }}>
          <Pie fill={t.pie[0]} wedge={t.pie[1]} to={t.pie[2]} />
        </span>
        <Count $w={62}>{t.len}</Count>
      </Status>
      <Sends $bg={bg} $pl={31}>
        <SendKnob name="A" />
        <SendColumn>
          <SendsLabel>Sends</SendsLabel>
          <SendKnob name="B" />
        </SendColumn>
      </Sends>
      <Strip $bg={bg}>
        <Controls $w={106} $pad="0 0 0 8px">
          <Pill>{t.vol}</Pill>
          <PanKnob />
          <PadButton $w={46} $h={46} $bg={c.orange} $fg="#141414" $fs={24}>{t.n}</PadButton>
          <PadButton $w={46} $h={26}>S</PadButton>
          <PadButton $w={46} $h={26}><ArmIcon /></PadButton>
        </Controls>
        <Meter level={t.level} />
        <FaderScale fader={t.fader} />
      </Strip>
    </Column>
  );
};

const GroupTrack = () => (
  <Column $w={148}>
    <Head $bg={c.body} $fg="#d8d8d8" $h={46} $ls={1.2}>
      1 Group
      <FoldIcon />
    </Head>
    <Slot $bg={c.lit}>
      <Launch $bg="transparent" $line="transparent">
        <PlayIcon color={c.play} />
      </Launch>
      <ScaleArt width="21" height="26" viewBox="0 0 21 26" style={{ marginLeft: 89 }}>
        <rect width="21" height="26" fill="#474747" />
        <path d="M-8 24L8 -4M-1 28L15 -2M6 28L22 0M14 28L28 4" stroke="#6a6a6a" strokeWidth="3.4" />
      </ScaleArt>
    </Slot>
    <Slot $bg={c.cell} />
    <Slot $bg={c.cell} />
    <Slot $bg={c.cell} $h={28} />
    <Status>
      <StopSquare />
      <span style={{ marginLeft: 50 }}>
        <Pie fill="#6a6a6a" wedge="#333" to={22} />
      </span>
    </Status>
    <Sends $bg={c.cell} $pl={15}>
      <SendKnob name="A" />
      <SendColumn>
        <SendsLabel>Sends</SendsLabel>
        <SendKnob name="B" />
      </SendColumn>
    </Sends>
    <Strip $bg={c.cell}>
      <Controls $w={94} $pad="0 4px 0 0">
        <Pill>-4.59</Pill>
        <PanKnob />
        <PadButton $w={46} $h={46} $bg={c.orange} $fg="#141414" $fs={24}>1</PadButton>
        <PadButton $w={46} $h={26}>S</PadButton>
      </Controls>
      <Meter level={{ dim: 64, lit: 94, peak: 46 }} />
      <PlainScale w={32} x={3} fader={39} />
    </Strip>
  </Column>
);

const TEAL = '#58bab0';

const OscTrack = () => (
  <Column $w={72}>
    <Head $bg={TEAL} $fg="#10302c" $h={46} $ls={-0.3}>8 OSC</Head>
    {[34, 34, 34, 28].map((h, i) => (
      <Slot key={i} $bg={TEAL} $h={h}>
        <Launch $bg="transparent" $line="#2f6e67">
          <PlayIcon color="#1f4f4a" />
        </Launch>
      </Slot>
    ))}
    <Status><StopSquare /></Status>
    <Sends $bg={c.cell} $pl={0} />
    <Strip $bg={c.cell}>
      <Controls $w={34} $pad="110px 0 0 4px" $start>
        <PadButton $w={30} $h={46} $bg={c.orange} $fg="#141414" $fs={24}>8</PadButton>
        <PadButton $w={30} $h={26}>S</PadButton>
        <PadButton $w={30} $h={26}><ArmIcon /></PadButton>
      </Controls>
      <Dots>{Array.from({ length: 14 }, (_, i) => <i key={i} />)}</Dots>
    </Strip>
  </Column>
);

const ReturnTrack = ({ id, name, bg, fg, ml }: { id: string; name: string; bg: string; fg: string; ml?: number }) => (
  <Column $w={72} $ml={ml}>
    <Head $bg={bg} $fg={fg} $h={46} $ls={0.1}>{name}</Head>
    <Slot $bg={c.lit} />
    <Slot $bg={c.cell} />
    <Slot $bg={c.cell} />
    <Slot $bg={c.cell} $h={28} />
    <Status />
    <ReturnSends>
      <PadButton $w={64} $h={26} $bg="#464646">-inf</PadButton>
      <PadButton $w={64} $h={26} $bg="#464646">-inf</PadButton>
    </ReturnSends>
    <Strip $bg={c.cell}>
      <Controls $w={40} $pad="0 0 0 4px" $start>
        <Pill $w={26} />
        <PadButton $w={30} $h={26} $mt={20}>C</PadButton>
        <PadButton $w={30} $h={46} $mt={20} $bg={c.orange} $fg="#141414" $fs={24}>{id}</PadButton>
        <PadButton $w={30} $h={26}>S</PadButton>
      </Controls>
      <Meter w={6} />
      <PlainScale w={14} x={-5} fader={23} />
    </Strip>
  </Column>
);

const MasterTrack = () => (
  <Column $w={186}>
    <Head $bg="#ccf54f" $fg="#2c3510" $h={46} $ls={0.9} style={{ paddingLeft: 10 }}>Master</Head>
    {[34, 34, 34, 28].map((h, i) => (
      <Slot key={i} $bg={i ? c.cell : c.lit} $h={h} style={{ alignItems: 'flex-start' }}>
        <svg width="16" height="34" viewBox="0 0 16 34" style={{ marginLeft: 8 }}>
          <path d="M0 8L16 17L0 26z" fill={c.dark} />
        </svg>
        <SceneNumber>{i + 1}</SceneNumber>
      </Slot>
    ))}
    <Status>
      <StopSquare />
      <svg width="26" height="26" viewBox="0 0 26 26" style={{ marginLeft: 83 }}>
        <rect x="1" y="1" width="24" height="24" fill="#999" stroke={c.ink} strokeWidth="2" />
        <path d="M6 5v16M10 7l5 6l-5 6zM17 9l5 4l-5 4z" stroke="#4a4a4a" strokeWidth="2" fill="#4a4a4a" />
      </svg>
      <svg width="40" height="26" viewBox="0 0 40 26" style={{ marginLeft: 5 }}>
        <rect x="1" y="1" width="38" height="24" fill="#f08650" stroke={c.ink} strokeWidth="2" />
        <path d="M6 5.500L18 13L6 20.500zM22 8h11M22 13h11M22 18h11" fill={c.ink} stroke={c.ink} strokeWidth="2" />
      </svg>
    </Status>
    <MasterSends>
      <Lead $span={1} />
      <PadButton $w={52} $h={26} $bg={c.orange} $fg="#141414">Post</PadButton>
      <MasterLabel>Sends</MasterLabel>
      <Lead $span={3} />
      <PadButton $w={52} $h={26} $bg={c.orange} $fg="#141414">Post</PadButton>
    </MasterSends>
    <Strip $bg={c.cell}>
      <Controls $w={106} $pad="0 0 0 8px">
        <Pill>-4.16</Pill>
        <PanKnob />
        <PadButton $w={50} $h={26} $mt={20} $bg="#9a9a9a" $fg="#4d4d4d">Solo</PadButton>
        <CueKnob />
      </Controls>
      <Meter level={{ dim: 56, lit: 81, peak: 41 }} />
      <FaderScale fader={25} />
    </Strip>
  </Column>
);

/* ---------- piano roll data ---------- */

const ROWS: [number, boolean][] = [
  [8, false], [20, true], [24, false], [20, true], [24, false], [22, false], [20, true], [24, false],
  [20, true], [24, false], [22, false], [20, true], [24, false], [20, true], [24, false], [20, true],
  [24, false], [22, false], [20, true], [22, false], [20, true], [24, false], [22, false], [20, true],
];

/* semitones above C3 -> top of the note inside the editor */
const NOTE_Y: Record<number, number> = { 0: 560, 2: 516, 3: 496, 5: 452, 7: 408, 8: 386, 10: 342, 12: 298, 17: 188, 19: 144 };

type NoteInfo = { s: number; len: number; p: number; v: number; maybe?: boolean };
const N = (s: number, len: number, p: number, v = 2, maybe = false): NoteInfo => ({ s, len, p, v, maybe });
const roll = (s: number, p: number, maybe: boolean) => [1, 2, 3, 4].map((v, i) => N(s + i, 1, p, v, maybe));

const NOTES: NoteInfo[] = [
  N(0, 2, 19), N(4, 2, 0, 2, true), N(8, 2, 5), N(12, 2, 8, 2, true),
  ...roll(16, 3, false), N(20, 2, 3), N(20, 2, 10, 1, true), N(22, 2, 10, 2, true), N(24, 2, 10, 3, true), N(24, 2, 5),
  ...roll(28, 12, true), N(32, 2, 12, 2, true), N(32, 2, 7), N(36, 2, 0, 2, true), N(40, 2, 12), N(44, 2, 2, 2, true),
  ...roll(48, 3, false), N(52, 2, 3), N(52, 2, 10, 1, true), N(54, 2, 10, 2, true), N(56, 2, 10, 3, true), N(56, 2, 17),
  ...roll(60, 0, true),
];

const STEP = 25.75;
const VCOLOR = ['', '#6b7049', '#757f42', '#808a3c', '#889433'];
const VEL_Y = [0, 43, 31, 21, 9];

const GridLines = () => (
  <Overlay width="1648" height="760" viewBox="0 0 1648 760">
    <g fill="#fff" opacity="0.055">
      <rect x="413" width="412" height="34" />
      <rect x="1237" width="411" height="34" />
      <rect x="413" y="114" width="412" height="646" />
      <rect x="1237" y="114" width="411" height="646" />
    </g>
    {Array.from({ length: 64 }, (_, i) => (
      <rect key={i} x={Math.round(i * STEP)} y="56" width="2" height="704" fill="#000" opacity={i % 16 === 0 ? 0.34 : i % 4 === 0 ? 0.22 : 0.11} />
    ))}
    <path d="M1 56V760" stroke="#111" strokeWidth="2" />
  </Overlay>
);

const VelocityLane = ({ kind }: { kind: 'velocity' | 'chance' }) => {
  const y = (n: NoteInfo) => (kind === 'velocity' ? VEL_Y[n.v] : n.maybe ? 19 : 7);
  return (
    <svg width="1648" height="62" viewBox="0 0 1648 62">
      {NOTES.map((n, i) => (
        <path key={i} d={`M${n.s * STEP + 10} ${y(n)}H${(n.s + n.len) * STEP + 1}`} stroke="#0c0c0c" strokeWidth="2" strokeDasharray={kind === 'chance' ? '6 2' : undefined} />
      ))}
      {[...NOTES].reverse().map((n, i) => (
        <circle key={i} cx={n.s * STEP + 7.5} cy={y(n)} r="5.8" fill={c.olive} stroke="#101010" strokeWidth="2" />
      ))}
    </svg>
  );
};

const Bracket = () => (
  <svg width="12" height="62" viewBox="0 0 12 62">
    <path d="M0 7H10M0 55H10M5 31H10M10 6V56" stroke="#e8e8e8" strokeWidth="2" fill="none" />
  </svg>
);

const RoundGlyph = ({ kind }: { kind: 'phones' | 'velocity' | 'chance' | 'play' }) => (
  <svg width="26" height="26" viewBox="0 0 26 26">
    <circle cx="13" cy="13" r="12" fill={kind === 'phones' ? '#3d7bcb' : kind === 'play' ? '#333' : c.orange} stroke={c.ink} strokeWidth="2" />
    {kind === 'phones' && (
      <>
        <circle cx="13" cy="12.500" r="7.400" fill="none" stroke="#1f3554" strokeWidth="2.200" />
        <path d="M11.500 15h3v9h-3z" fill="#3d7bcb" />
        <path d="M10.500 16.500v6M15.500 16.500v6" stroke="#1f3554" strokeWidth="1.600" />
      </>
    )}
    {kind === 'velocity' && <path d="M9 13h12" stroke={c.ink} strokeWidth="2.400" />}
    {kind === 'chance' && <path d="M13 13h9" stroke={c.ink} strokeWidth="2.400" strokeDasharray="3 1.500" />}
    {(kind === 'velocity' || kind === 'chance') && <circle cx="8.500" cy="13" r="3.400" fill={c.ink} />}
    {kind === 'play' && <path d="M8 6.500L19.500 13L8 19.500z" fill="#f0f0f0" />}
  </svg>
);

const BEATS = ['1', '1.2', '1.3', '1.4', '2', '2.2', '2.3', '2.4', '3', '3.2', '3.3', '3.4', '4', '4.2', '4.3', '4.4'];

const ClipView = () => (
  <ClipPanel>
    <ClipHandle>
      <ClipActive />
      <ClipName>Clip</ClipName>
    </ClipHandle>
    <EditorSide>
      <SideHead>
        <PadButton $w={92} $h={26}>Fold</PadButton>
        <PadButton $w={92} $h={26} $bg="#444" $fg="#858585">Scale</PadButton>
      </SideHead>
      <SideBody>
        <IconRail>
          <RoundGlyph kind="phones" />
          <span style={{ height: 506 }} />
          <RoundGlyph kind="velocity" />
          <span style={{ height: 10 }} />
          <RoundGlyph kind="chance" />
          <span style={{ height: 18 }} />
          <RoundGlyph kind="play" />
        </IconRail>
        <SidePane>
          <KeyArea>
            <Octaves>
              <Octave $h={206}>C4</Octave>
              <Octave $h={262}>C3</Octave>
              <Octave $h={42} />
            </Octaves>
            <Keys>
              {ROWS.map(([h, black], i) => (
                <Key key={i} $h={h} $black={black} />
              ))}
            </Keys>
          </KeyArea>
          <Band $h={8} $bg={c.dark} />
          <LaneHead $bg="#5b5b5b">
            <LaneName $t={4}>Velocity</LaneName>
            <LaneRange $t={1}><span>127</span><span>1</span></LaneRange>
            <Bracket />
          </LaneHead>
          <Band $h={2} $bg={c.body} />
          <LaneHead $bg={c.cell}>
            <LaneName $t={4}>Chance</LaneName>
            <LaneRange $t={1}><span>100%</span><span>0%</span></LaneRange>
            <Bracket />
          </LaneHead>
          <Band $h={2} $bg={c.body} />
        </SidePane>
      </SideBody>
    </EditorSide>
    <Editor>
      <Ruler>
        {BEATS.map((b) => (
          <RulerBeat key={b}>{b}</RulerBeat>
        ))}
      </Ruler>
      <LoopBrace>
        <svg width="20" height="18" viewBox="0 0 20 18">
          <path d="M0 -1L18 9L0 19z" fill={c.lit} stroke="#000" strokeWidth="2" />
        </svg>
        <svg width="18" height="18" viewBox="0 0 18 18">
          <path d="M20 -3L1 9L20 21z" fill={c.lit} stroke="#000" strokeWidth="2" />
        </svg>
      </LoopBrace>
      <MarkerRow>
        <svg width="20" height="22" viewBox="0 0 20 22">
          <path d="M0 0L18 11L0 22z" fill={c.lit} stroke="#000" strokeWidth="2" />
        </svg>
      </MarkerRow>
      <ScaleRow>
        <svg width="6" height="8" viewBox="0 0 6 8"><path d="M0 0H6V8z" fill="#58b4d4" /></svg>
      </ScaleRow>
      {ROWS.map(([h, black], i) => (
        <RollRow key={i} $h={h} $black={black} />
      ))}
      <Band $h={8} $bg={c.dark} />
      <Lane><VelocityLane kind="velocity" /></Lane>
      <Band $h={2} $bg={c.body} />
      <Lane><VelocityLane kind="chance" /></Lane>
      <Band $h={2} $bg={c.body} />
      <GridLines />
      {NOTES.map((n, i) => (
        <Note
          key={i}
          $c={VCOLOR[n.v]}
          $h={n.p === 3 ? 18 : 20}
          style={{ left: Math.round(n.s * STEP), top: NOTE_Y[n.p], width: Math.round((n.s + n.len) * STEP) - Math.round(n.s * STEP) + (n.len > 1 ? 0 : 1) }}
        >
          {n.maybe && <NoteChance />}
        </Note>
      ))}
      <Playhead $l={692} $t={114} $h={646} />
      <GridSize>1/16</GridSize>
    </Editor>
  </ClipPanel>
);

const DeviceThumb = () => (
  <svg width="146" height="32" viewBox="0 0 146 32">
    <rect width="137" height="32" fill="#454545" />
    <rect width="137" height="3" fill="#6b8fa3" />
    <rect x="76" y="1" width="8" height="1.500" fill="#ddd" />
    <rect x="1" y="5" width="2" height="2" fill={c.orange} /><rect x="1" y="13" width="2" height="2" fill={c.orange} /><rect x="1" y="19" width="2" height="2" fill={c.orange} />
    {[0, 1].map((r) =>
      [0, 1, 2, 3, 4, 5, 6, 7].map((k) => (
        <g key={`${r}${k}`}>
          <rect x={5 + k * 9} y={4 + r * 14} width="7.500" height="4" fill="#7a7a7a" />
          <circle cx={9 + k * 9} cy={12.500 + r * 13.500} r="2.500" fill="#555" stroke={r && k === 2 ? '#3fa7cf' : '#1e1e1e'} />
        </g>
      )),
    )}
    <rect x="77" y="8" width="13" height="13" fill={c.olive} />
    <path d="M78 11.500h11M78 14.500h11M78 17.500h11" stroke="#5c6422" />
    {[9, 12.500, 16, 19.500].map((y) => (
      <g key={y}>
        <rect x="92" y={y - 1} width="6" height="2" fill="#4f9fc0" />
        <rect x="99" y={y - 1} width="5" height="2" fill="#242424" />
        <rect x="106" y={y - 1} width="4" height="2" fill={c.orange} />
        <rect x="112" y={y - 1} width="5" height="2" fill="#242424" />
      </g>
    ))}
    <rect x="94" y="5" width="12" height="2" fill="#222" /><rect x="110" y="5" width="6" height="2" fill="#58b4d4" />
    <path d="M84 25.500h26M92 28h10" stroke="#9a9a9a" strokeDasharray="3 1" />
    <path d="M119 4v28" stroke="#222" />
    <path d="M121 8v18M125 16v10M128 16v10M132 12v14" stroke="#999" />
    <rect x="120" y="1" width="2" height="2" fill={c.orange} />
    <rect x="137" y="15" width="2" height="4" fill="#3fa34a" />
    <rect x="140" width="4" height="32" fill="#4a4a4a" /><rect x="141" y="1" width="2" height="2" fill={c.orange} /><rect x="143" y="15" width="3" height="4" fill="#3fa34a" />
  </svg>
);

const LiveStatusBar = () => (
  <StatusBar>
    <RoundButton style={{ marginTop: 18 }}>
      <svg width="20" height="22" viewBox="0 0 20 22"><path d="M1 1Q0 0 2 1L18 10Q20 11 18 12L2 21Q0 22 0 20z" fill="#555" /></svg>
    </RoundButton>
    <InfoBox />
    <OverviewTab>
      <Overview>
        {NOTES.map((n, i) => (
          <MiniNote key={i} style={{ left: n.s * 6.09 - 1, top: 28 - Math.round(n.p * 0.685) * 2, width: n.len * 6 - 0.5 }} />
        ))}
        <Playhead $l={162} $t={0} $h={32} />
      </Overview>
    </OverviewTab>
    <DeviceTab>
      Opsix
      <DeviceThumb />
    </DeviceTab>
    <RoundButton $bg={c.deep} style={{ marginTop: 18 }}>
      <svg width="22" height="22" viewBox="0 0 22 22"><path d="M1 21L9.500 1.500Q11 -1 12.500 1.500L21 21z" fill="#5c5c5c" /></svg>
    </RoundButton>
  </StatusBar>
);

/* ---------- control bar ---------- */

const stroke = { fill: 'none', stroke: '#f0f0f0', strokeWidth: 2 } as const;

const LiveControlBar = () => (
  <ControlBar>
    <Split />
    <Tool $w={52}>Tap</Tool>
    <Tool $w={84} $ls={1.1}>110.00</Tool>
    <Tool $w={34}><svg width="22" height="18" viewBox="0 0 22 18"><path d="M0 0h3.500v18H0zM6 0h2v18H6zM13 0h1.500v18H13zM20 0h1.500v18H20z" fill="#f0f0f0" /></svg></Tool>
    <Tool $w={34}><svg width="22" height="18" viewBox="0 0 22 18"><path d="M0 0h1.500v18H0zM7 0h1.500v18H7zM13 0h2v18h-2zM18 0h4v18h-4z" fill="#f0f0f0" /></svg></Tool>
    <Tool $w={84} $ls={0.4}>{'4  /  4'}</Tool>
    <Tool $w={80} style={{ gap: 20, paddingLeft: 6 }}>
      <svg width="32" height="16" viewBox="0 0 32 16"><circle cx="7" cy="8" r="6" {...stroke} /><circle cx="24.500" cy="8" r="7.500" fill="#f0f0f0" /></svg>
      <Caret />
    </Tool>
    <Tool $w={90} $ls={0.9} style={{ gap: 16, paddingLeft: 1 }}>1 Bar<Caret /></Tool>
    <Tool $w={42} $ml={40}>
      <svg width="30" height="18" viewBox="0 0 30 18"><path d="M0 9h12M19 9h4M26 9h4" {...stroke} /><path d="M8 0L18 9L8 18z" fill="#f0f0f0" /></svg>
    </Tool>
    <Tool $w={164} style={{ justifyContent: 'flex-end', paddingRight: 1 }}>
      <Position><span>2</span><span>.</span></Position>
      <Position><span>3</span><span>.</span></Position>
      <Position><span>3</span></Position>
    </Tool>
    <Tool $w={26} $ml={36} $bare><PlayIcon color={c.play} w={26} h={30} /></Tool>
    <Tool $w={26} $ml={16} $bare><svg width="26" height="26"><rect width="26" height="26" fill="#ececec" /></svg></Tool>
    <Tool $w={26} $ml={16} $bare><svg width="26" height="26"><circle cx="13" cy="13" r="13" fill="#dedede" /></svg></Tool>
    <Tool $w={34} $ml={36}><svg width="18" height="18" viewBox="0 0 18 18"><path d="M9 0v18M0 9h18" {...stroke} /></svg></Tool>
    <Tool $w={34} $on>
      <svg width="24" height="24" viewBox="0 0 24 24" fill="none" stroke="#1a1a1a" strokeWidth="2"><circle cx="5.500" cy="18" r="4" /><circle cx="18.500" cy="5.500" r="4" /><path d="M8.500 15L15.500 8.500" /></svg>
    </Tool>
    <Tool $w={34}><svg width="18" height="18" viewBox="0 0 18 18"><path d="M0 9L10 1V17z" fill="#777" /><path d="M8 9h10" stroke="#777" strokeWidth="2.500" /></svg></Tool>
    <Tool $w={34}><svg width="18" height="18" viewBox="0 0 18 18"><path d="M1 6V1h5M12 1h5v5M17 12v5h-5M6 17H1v-5" fill="none" stroke="#6f6f6f" strokeWidth="2" /></svg></Tool>
    <Tool $w={34}><svg width="18" height="18" viewBox="0 0 18 18"><circle cx="9" cy="9" r="8" {...stroke} /></svg></Tool>
    <Tool $w={42} $ml={42}><svg width="26" height="14" viewBox="0 0 26 14"><path d="M0 1h9L17 13h9" {...stroke} /></svg></Tool>
    <Tool $w={42}><svg width="26" height="22" viewBox="0 0 26 22"><path d="M11 18H4a3 3 0 0 1-3-3V4a3 3 0 0 1 3-3h18a3 3 0 0 1 3 3v11a3 3 0 0 1-3 3h-5" {...stroke} /><path d="M10 18l7-5v10z" fill="#f0f0f0" /></svg></Tool>
    <Tool $w={42}><svg width="26" height="14" viewBox="0 0 26 14"><path d="M0 13h9L17 1h9" {...stroke} /></svg></Tool>
    <Tool $w={34} $ml={164}><svg width="22" height="22" viewBox="0 0 22 22"><path d="M0 20h22v2H0zM4 17l1.500-6L14 0l6 4l-9 11z" fill="#f0f0f0" /></svg></Tool>
    <Tool $w={34}><svg width="22" height="22" viewBox="0 0 22 22"><rect x="1" y="1" width="20" height="20" {...stroke} /><path d="M5.500 1h4v13h-1v8h-1.500v-8h-1.500zM12.500 1h4v13h-1.500v8h-1.500v-8h-1z" fill="#f0f0f0" /></svg></Tool>
    <Tool $w={52}>Key</Tool>
    <Split />
    <Tool $w={56} $ls={0.3}>MIDI</Tool>
    <Tool $w={116} style={{ justifyContent: 'flex-start', paddingLeft: 2 }}>
      <CpuBar />10 %<span style={{ width: 30 }} /><Caret />
    </Tool>
    <Tool $w={60} />
    <Split />
  </ControlBar>
);

const LiveWindow = () => (
  <Window $w={1932} $edge="#6c6c6a" $bg={c.body}>
    <TitleBar $bg="#3c3c39" $line="#0c0c0c" $fg="#b4b4b2">
      <Lights>
        <Light $c="#ec6a5e" $dot />
        <Light $c="#f4bf50" />
        <Light $c="#61c455" />
      </Lights>
      <Title $ls={0.3}>{'tblswvs perform 1 - minimal blank  [tblswvs perform 1 - minimal.app]'}</Title>
    </TitleBar>
    <LiveControlBar />
    <Session>
      <Gutter>
        <RoundButton>
          <svg width="22" height="22" viewBox="0 0 22 22"><path d="M0 2Q0 0 2 0H20Q22 0 22 2L11 22z" fill="#555" /></svg>
        </RoundButton>
        <RoundButton>
          <svg width="24" height="22" viewBox="0 0 24 22"><path d="M1 7C5 -1 9 1 12 5S20 7 23 2M1 19C5 11 9 13 12 17S20 19 23 14" fill="none" stroke="#505050" strokeWidth="2" /></svg>
        </RoundButton>
      </Gutter>
      <Mixer>
        <Columns>
          <GroupTrack />
          {TRACKS.map((t) => (
            <Track key={t.n} t={t} />
          ))}
          <OscTrack />
          <Blank $w={80} />
          <ReturnTrack id="A" name="A Rev" bg="#66bd38" fg="#16300a" ml={2} />
          <ReturnTrack id="B" name="B Del" bg="#ae7bc2" fg="#2c1838" />
          <MasterTrack />
        </Columns>
        <HScroll />
      </Mixer>
      <SideRail>
        <RailTop>
          <RoundButton><svg width="22" height="20" viewBox="0 0 22 20"><path d="M0 2h22M0 10h22M0 18h22" stroke="#565656" strokeWidth="3.500" /></svg></RoundButton>
          <RoundButton><svg width="20" height="22" viewBox="0 0 20 22"><path d="M2 0v22M10 0v22M18 0v22" stroke={c.orange} strokeWidth="3.500" /></svg></RoundButton>
        </RailTop>
        <RailBody>
          <VScroll />
          <Toggle $bg="#f0f0f0" $mb={12} $fs={13}>I·O</Toggle>
          <Toggle $bg={c.orange} $h={24} $r="13px 13px 0 0" $mb={4}>S</Toggle>
          <Toggle $bg={c.orange} $h={24} $r="0 0 13px 13px" $mb={12}>R</Toggle>
          <Toggle $bg={c.orange} $mb={12}>M</Toggle>
          <Toggle $bg="#969696" $mb={12}>D</Toggle>
          <Toggle $bg="#969696" $mb={12}>X</Toggle>
          <Toggle $bg="#969696" $mb={0}>C</Toggle>
        </RailBody>
      </SideRail>
    </Session>
    <ClipView />
    <LiveStatusBar />
  </Window>
);

/* ---------- sequencer window ---------- */

const STEP_FILL: Record<number, [number, string]> = {
  0: [80, '#646464'],
  4: [60, '#646464'],
  8: [80, '#646464'],
  10: [80, '#467440'],
  12: [60, '#646464'],
};
const VECTOR = [7, 0, 0, 4, 0, 0, 0, 0, 0, 0, 0, 0];

const SequencerWindow = () => (
  <Window $w={1857} $edge="#3f4040" $bg="#000">
    <TitleBar $bg="#323433" $line="#323433" $fg="#7a7b7b">
      <Lights>
        <Light $c="#595a5a" />
        <Light $c="#595a5a" />
        <Light $c="#595a5a" />
      </Lights>
      <Title>tblswvs</Title>
    </TitleBar>
    <SeqBody>
      <Sidebar>
        <NavItem>Kick</NavItem>
        <NavItem>Snare</NavItem>
        <NavItem>HiHat</NavItem>
        <NavItem>Perc</NavItem>
        <NavItem $c={c.green}>Opsix</NavItem>
        <NavItem>Hydra</NavItem>
        <NavItem $c="#fff">Docs</NavItem>
      </Sidebar>
      <Main>
        <Heading>tblswvs</Heading>
        <Params>
          <Param $w={180}>Pulse: <Mono $fs={28}>16n</Mono></Param>
          <Param $w={280}>Note Length: <Mono $fs={28}>8n</Mono></Param>
          <Param $w={280}>Fills Duration: <Mono $fs={28}>4n</Mono></Param>
          <Param $w={280}>Fill Measures: <Mono $fs={28}>2 4</Mono></Param>
          <Param>Super Measure:</Param>
          <NumberField>4</NumberField>
          <NumberField>2</NumberField>
        </Params>
        <Steps>
          {Array.from({ length: 16 }, (_, i) => (
            <Step key={i}>{STEP_FILL[i] && <StepFill $h={STEP_FILL[i][0]} $c={STEP_FILL[i][1]} />}</Step>
          ))}
        </Steps>
        <Counts>
          {['4', '', '', '', '2', '', '', '', '', '', '', '', '4'].map((n, i) => (
            <span key={i}>{n}</span>
          ))}
        </Counts>
        <VectorRow>
          <Bars>
            {VECTOR.map((v, i) => (
              <Bar key={i} $edge={i < 7 ? '#3c3c3c' : '#202020'}>
                <BarUpper>
                  {v > 0 && <BarFill $h={v * 20.3 + 1} />}
                  <BarValue>{v}</BarValue>
                </BarUpper>
                {v === 0 && <BarZero />}
              </Bar>
            ))}
          </Bars>
          <Checks $mt={-8} $gap={10}>
            <Check>Melody Vector<CheckBox $on /></Check>
            <Check>Randomizer<CheckBox /></Check>
          </Checks>
        </VectorRow>
        <Detail>
          <div>
            <Line $h={44}>Type: <Mono>simple melody</Mono></Line>
            <Line $mt={18}>Input Notes:</Line>
            <Line $h={40} $mt={2} $mono $c={c.green}>G3 C3 F3 D3 Eb3 Bb3 F3 C3</Line>
            <Line $h={47} $mt={45} $mono>A/B Pad</Line>
            <Line $h={47} $mono>Basic FM</Line>
            <Line $h={47} $mono $c={c.green}>Simple Bass</Line>
            <Line $h={47} $mono>OSC Juno</Line>
          </div>
          <Checks $gap={20}>
            <Check>Current Clip:<ClipIndex>1</ClipIndex></Check>
            <Check>Create New:<CheckBox /></Check>
          </Checks>
        </Detail>
        <Rule />
        <Line $h={44}>Key: <Mono>C Minor</Mono></Line>
        <Line $mt={38}>Queued Melody:</Line>
        <Line $h={40} $mt={2} $mono $c={c.green}>G3 C3 F3 D3 Eb3 Bb3 F3 C3</Line>
        <Line $mt={38}>Queued Progression:</Line>
        <Line $mt={40}>Mutating Tracks:</Line>
        <Line $mt={22}>Mutations:</Line>
      </Main>
    </SeqBody>
  </Window>
);

const SystemMenu = () => (
  <MenuBar>
    <MenuGroup>
      <AppleMark><FaApple size={34} /></AppleMark>
      <MenuItem $w={94} $bold $ls={-0.2}>Live</MenuItem>
      <MenuItem $w={84}>File</MenuItem>
      <MenuItem $w={88}>Edit</MenuItem>
      <MenuItem $w={122}>Create</MenuItem>
      <MenuItem $w={99} $ls={-1}>View</MenuItem>
      <MenuItem $w={136}>Options</MenuItem>
      <MenuItem $w={60} $ls={-0.8}>Help</MenuItem>
    </MenuGroup>
    <MenuGroup>
      <StatusIcon $w={68}>
        <svg width="38" height="26" viewBox="0 0 38 26"><path d="M0 8h6L14 1q2-1 2 1v22q0 2-2 1L6 18H0z" fill="#f2f2f2" /><path d="M21 8q3 5 0 10M26 4q5 9 0 18M31 1q8 12 0 24" fill="none" stroke="#f2f2f2" strokeWidth="2.400" strokeLinecap="round" /></svg>
      </StatusIcon>
      <StatusIcon $w={68}>
        <svg width="26" height="26" viewBox="0 0 26 26"><circle cx="13" cy="13" r="11.800" fill="none" stroke="#f2f2f2" strokeWidth="2.400" /><path d="M9.500 7.500L19 13L9.500 18.500z" fill="#f2f2f2" /></svg>
      </StatusIcon>
      <StatusIcon $w={68}>
        <svg width="34" height="24" viewBox="0 0 34 24"><path d="M2 8.500Q17-5 32 8.500M7.500 14Q17 5.500 26.500 14" fill="none" stroke="#f2f2f2" strokeWidth="4" /><path d="M11.500 18.200Q17 13.500 22.500 18.200L17 24z" fill="#f2f2f2" /></svg>
      </StatusIcon>
      <StatusIcon $w={68}><FaGlobeAmericas size={32} color="#97999b" /></StatusIcon>
      <StatusIcon $w={68}>
        <svg width="28" height="28" viewBox="0 0 28 28" fill="none" stroke="#f2f2f2" strokeWidth="2.800" strokeLinecap="round"><circle cx="11" cy="11" r="9.500" /><path d="M18 18.500L26 26.500" /></svg>
      </StatusIcon>
      <StatusIcon $w={34} style={{ justifyContent: 'flex-start', paddingLeft: 6 }}>
        <svg width="34" height="26" viewBox="0 0 34 26"><rect x="1.200" y="1.200" width="32" height="10" rx="5" fill="none" stroke="#f2f2f2" strokeWidth="2.400" /><circle cx="7" cy="6.200" r="3.600" fill="#f2f2f2" /><rect y="14.500" width="34" height="11.500" rx="5.700" fill="#f2f2f2" /><circle cx="25" cy="20.200" r="3.600" fill="#444" /></svg>
      </StatusIcon>
    </MenuGroup>
  </MenuBar>
);

export default function App() {
  return (
    <Desktop>
      <Global />
      <SystemMenu />
      <Windows>
        <LiveWindow />
        <SequencerWindow />
      </Windows>
    </Desktop>
  );
}
